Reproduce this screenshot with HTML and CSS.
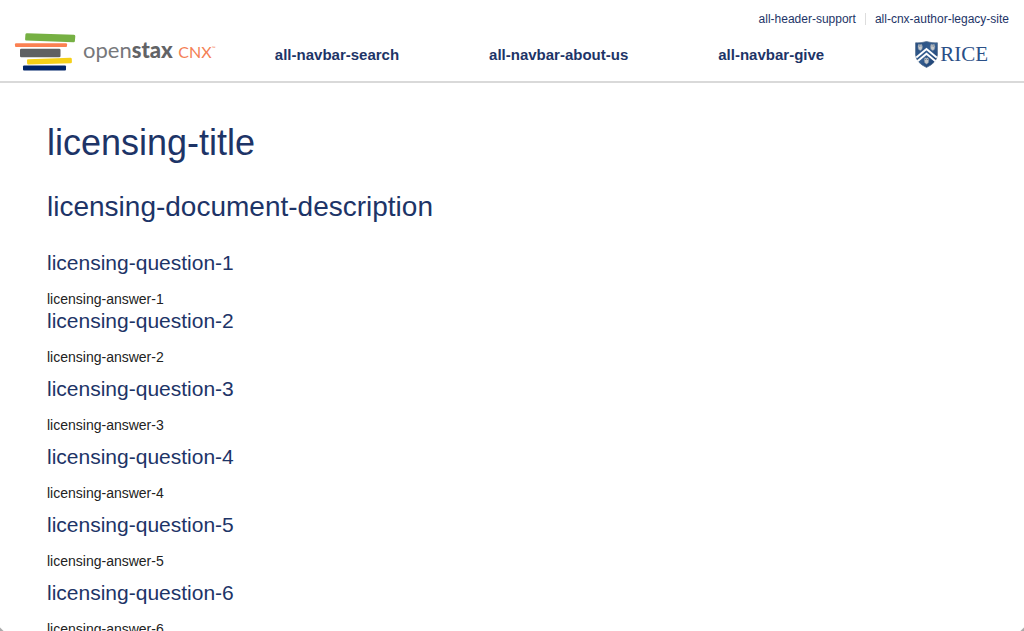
FILE: index.html
```html
<!DOCTYPE html>
<html lang="en">
<head>
<meta charset="utf-8">
<title>licensing-title</title>
<link rel="stylesheet" href="styles.css">
</head>
<body>
<header class="site-header">
  <div class="top-links">
    <a href="#">all-header-support</a>
    <a href="#">all-cnx-author-legacy-site</a>
  </div>
  <div class="main-bar">
    <a class="brand" href="#">
      <svg class="books" width="60" height="38" viewBox="0 0 60 38" aria-hidden="true">
        <path d="M12 .2 59 1.8Q60.400 1.900 60.300 3.200L59.900 8Q59.800 9.400 58.500 9.300L11.200 7.600Q10 7.500 10.100 6.300L10.400 1.500Q10.500.2 12 .2z" fill="#76b043"/>
        <rect x="0" y="10.300" width="52" height="3.800" rx="1" fill="#fb8152"/>
        <rect x="5" y="15.700" width="40.500" height="8.600" rx="1.300" fill="#5f6062"/>
        <path d="M13 26.200 55.500 24.700Q56.700 24.700 56.800 25.900L56.900 29Q56.900 30.200 55.700 30.300L13.300 31.500Q12.100 31.500 12.100 30.300L12 27.400Q12 26.200 13 26.200z" fill="#f5d019"/>
        <rect x="8" y="32.600" width="43" height="4.800" rx="1" fill="#00246a"/>
      </svg>
      <span class="brand-text">open<b>stax</b> <span class="cnx">CNX</span><sup>™</sup></span>
    </a>
    <nav class="nav">
      <a href="#">all-navbar-search</a>
      <a href="#">all-navbar-about-us</a>
      <a href="#">all-navbar-give</a>
    </nav>
    <a class="rice" href="#">
      <svg class="shield" width="23" height="27" viewBox="0 0 23 27" aria-hidden="true">
        <defs>
          <linearGradient id="steel" x1="0" x2="1" y1="0" y2="1">
            <stop offset="0" stop-color="#254b7d"/><stop offset=".5" stop-color="#365f91"/><stop offset="1" stop-color="#123568"/>
          </linearGradient>
        </defs>
        <path d="M.6 1.800Q6 2.200 11.500.6Q17 2.200 22.400 1.800V14Q21.500 22 11.500 26.400Q1.500 22 .6 14z" fill="url(#steel)" stroke="#526d8e" stroke-width=".8"/>
        <path d="M1.300 16.500 11.500 8 21.700 16.500M2.500 20.300 11.500 12.700 20.500 20.300" fill="none" stroke="#fff" stroke-width="1.900"/>
        <g fill="#c5c9cc" stroke="#8795a5" stroke-width=".5">
          <path id="owl" d="M3.500 3.200 5 3.800 6.700 3.200 7.400 5.500 7 8.200 5.300 9.500 3.400 8.200 3 5.500z"/>
          <use href="#owl" x="12.500"/>
          <use href="#owl" x="6.300" y="13.500"/>
        </g>
        <path d="M4.200 5H4.800M5.700 5H6.300M16.700 5H17.300M18.200 5H18.800M10.500 18.500H11.100M12 18.500H12.600" stroke="#34455b"/>
      </svg>
      <span>RICE</span>
    </a>
  </div>
</header>
<main class="content">
  <h1>licensing-title</h1>
  <p class="description">licensing-document-description</p>
  <section class="qa qa-first"><h2>licensing-question-1</h2><p>licensing-answer-1</p></section>
  <section class="qa"><h2>licensing-question-2</h2><p>licensing-answer-2</p></section>
  <section class="qa"><h2>licensing-question-3</h2><p>licensing-answer-3</p></section>
  <section class="qa"><h2>licensing-question-4</h2><p>licensing-answer-4</p></section>
  <section class="qa"><h2>licensing-question-5</h2><p>licensing-answer-5</p></section>
  <section class="qa"><h2>licensing-question-6</h2><p>licensing-answer-6</p></section>
</main>
</body>
</html>
```
FILE: styles.css
```css
* { box-sizing: border-box; }

html {
  background:
    linear-gradient(45deg, #aaa 2px, transparent 3px) fixed,
    linear-gradient(-45deg, #aaa 2px, transparent 3px) fixed,
    #fff;
}

body {
  margin: 0;
  font-family: "Liberation Sans", Arial, sans-serif;
  font-size: 14px;
  line-height: 20px;
  color: #222;
}

a { color: #1d3467; text-decoration: none; }

.site-header {
  padding-top: 9px;
  border-bottom: 2px solid #d9d9d9;
}

.top-links {
  display: flex;
  justify-content: flex-end;
  padding-right: 15px;
  font-size: 12px;
}

.top-links a + a {
  margin-left: 9px;
  padding-left: 10px;
  background: linear-gradient(#ddd, #ddd) 0 4px / 1px 12px no-repeat;
}

.main-bar {
  display: flex;
  align-items: flex-start;
  height: 52px;
  padding: 0 36px 0 15px;
}

.brand {
  display: flex;
  gap: 8px;
  padding-top: 4px;
}

.books { overflow: visible; }

.brand-text {
  font-family: Lato, sans-serif;
  font-size: 22px;
  line-height: 34px;
  color: #77787b;
  white-space: nowrap;
}

.brand-text b { color: #626366; font-weight: 900; }
.brand-text .cnx { color: #f47f55; font-size: 16px; }
.brand-text sup { color: #f47f55; font-size: 5px; line-height: 1px; vertical-align: 8px; }

.nav {
  display: flex;
  flex: 1;
  justify-content: flex-end;
  gap: 90px;
  padding: 16px 91px 0 0;
  font-size: 15px;
  font-weight: 700;
}

.rice {
  display: flex;
  gap: 2px;
  padding-top: 12px;
  font-family: "Liberation Serif", serif;
  font-size: 21px;
  line-height: 27px;
  color: #2a4f87;
}

.content { padding: 40px 47px; }

h1, h2, p { margin: 0; }

h1, h2 { color: #1d3467; font-weight: 400; }

h1 {
  margin-bottom: 26px;
  font-size: 36px;
  line-height: 40px;
}

.description {
  margin-bottom: 26px;
  font-size: 28px;
  line-height: 36px;
  color: #1d3467;
}

.qa { margin-bottom: 10px; }
.qa-first { margin-bottom: 0; }

.qa h2 {
  margin-bottom: 14px;
  font-size: 21px;
  line-height: 24px;
}
```
